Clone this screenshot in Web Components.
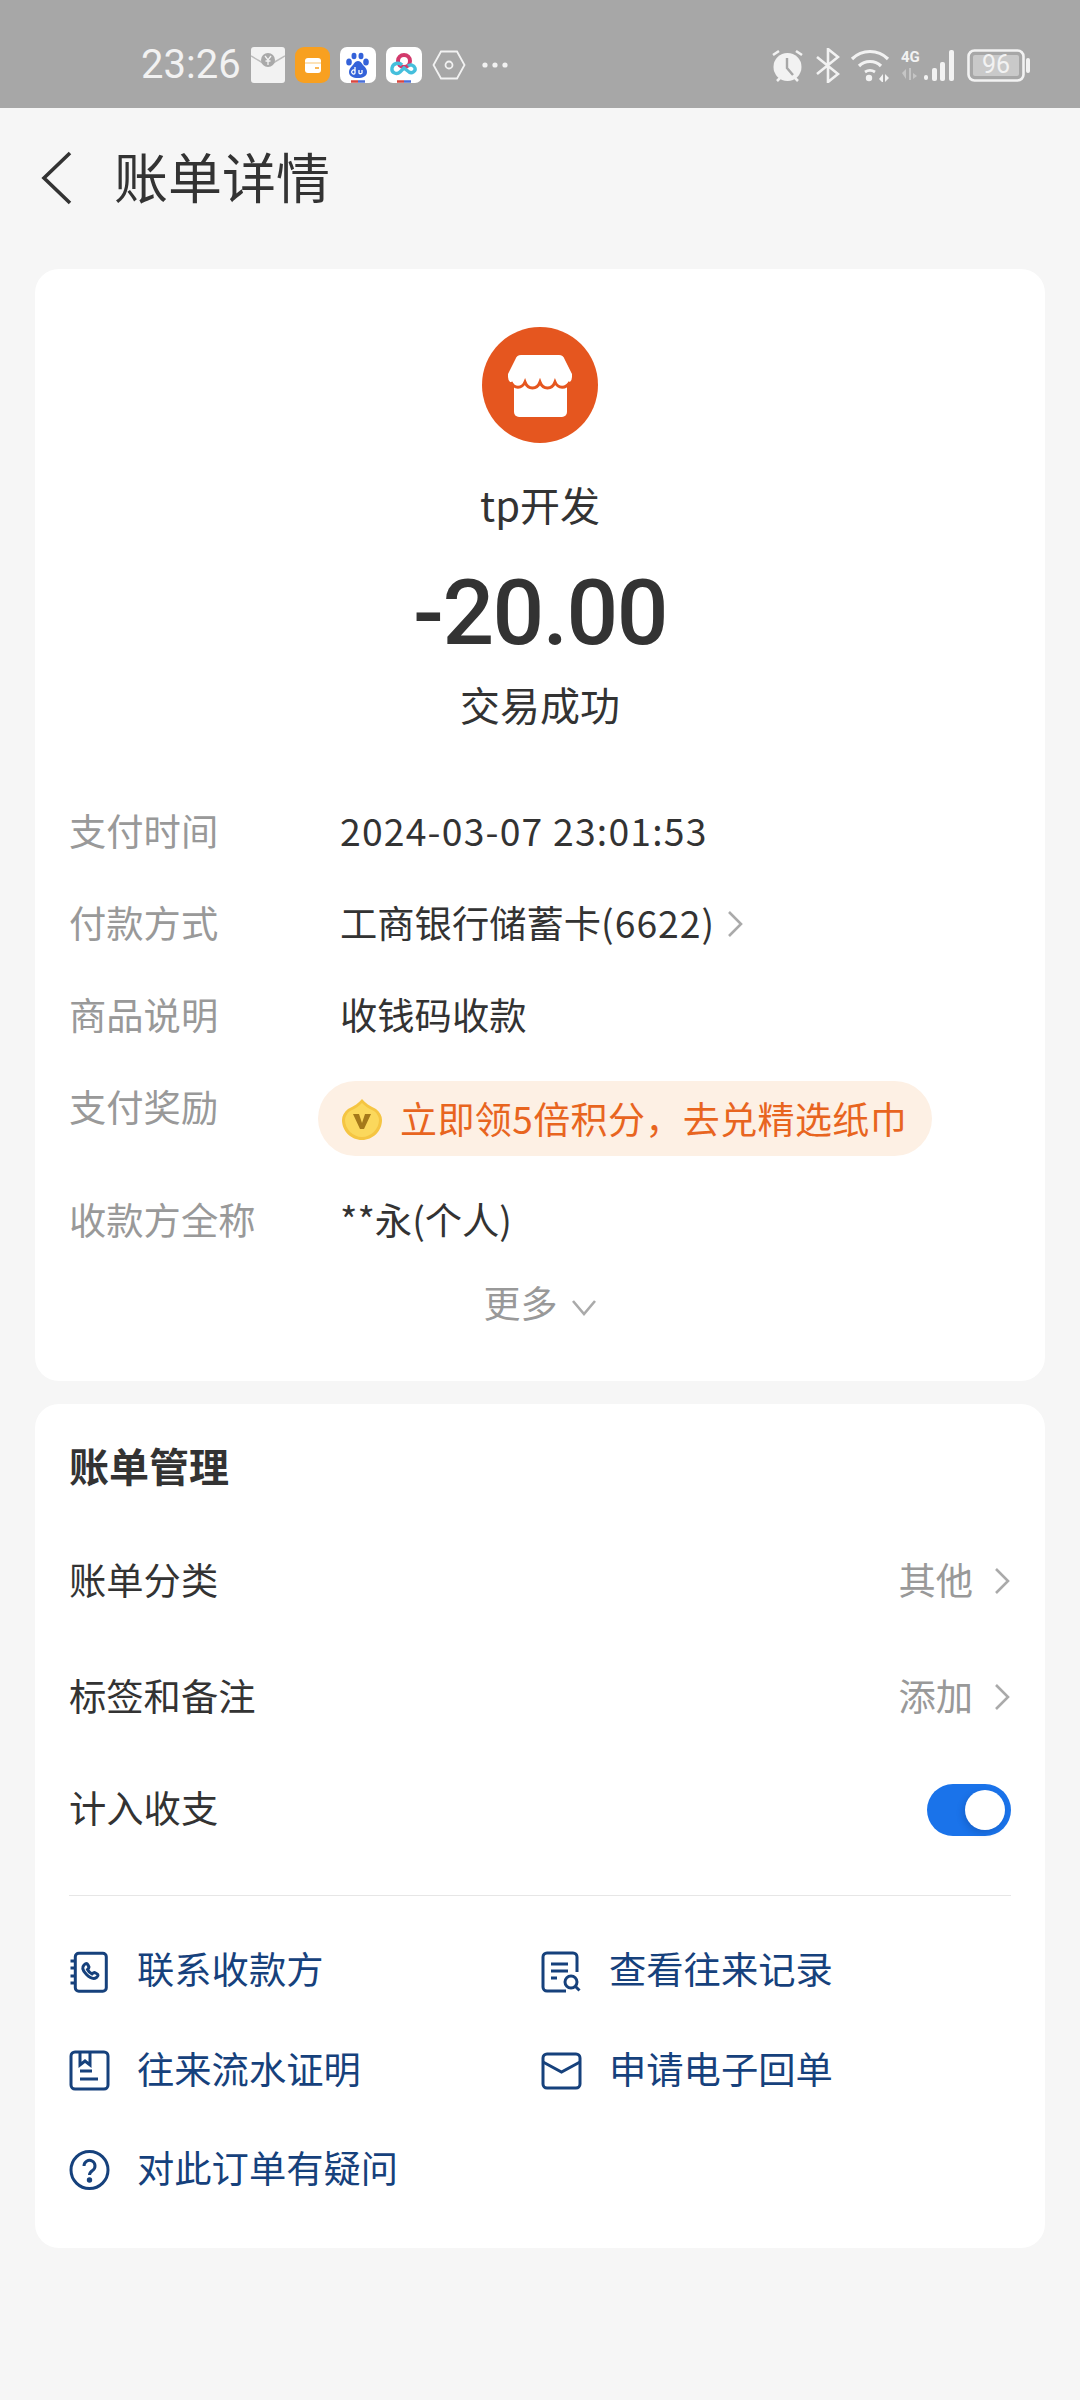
<!DOCTYPE html>
<html lang="zh">
<head>
<meta charset="utf-8">
<title>账单详情</title>
<style>
  html, body { margin: 0; padding: 0; background: #f6f6f6; }
  body { width: 1080px; height: 2400px; overflow: hidden; font-family: "Noto Sans CJK SC", "Noto Sans", sans-serif; color: #333; }
  .date { letter-spacing: 1.2px; }
  .card-no { letter-spacing: 1px; }
</style>
</head>
<body>
<status-bar></status-bar>
<app-header>账单详情</app-header>

<bill-card style="margin-top:28px">
  <bill-summary name="tp开发" amount="-20.00" status="交易成功"></bill-summary>
  <info-row label="支付时间"><span class="date">2024-03-07 23:01:53</span></info-row>
  <info-row label="付款方式" arrow><span>工商银行储蓄卡<span class="card-no">(6622)</span></span></info-row>
  <info-row label="商品说明">收钱码收款</info-row>
  <info-row label="支付奖励" tall><reward-pill>立即领5倍积分，去兑精选纸巾</reward-pill></info-row>
  <info-row label="收款方全称">**永(个人)</info-row>
  <more-toggle>更多</more-toggle>
</bill-card>

<bill-card style="margin-top:23px">
  <manage-panel heading="账单管理">
    <manage-row label="账单分类" value="其他"></manage-row>
    <manage-row label="标签和备注" value="添加"></manage-row>
    <manage-row label="计入收支" short><toggle-switch></toggle-switch></manage-row>
    <link-grid>
      <link-item icon="phone">联系收款方</link-item>
      <link-item icon="search">查看往来记录</link-item>
      <link-item icon="book">往来流水证明</link-item>
      <link-item icon="mail">申请电子回单</link-item>
      <link-item icon="help">对此订单有疑问</link-item>
    </link-grid>
  </manage-panel>
</bill-card>

<script>
const chevron = (dir, color) => {
  if (dir === 'down') {
    return `<svg width="26" height="17" viewBox="0 0 26 17" fill="none" stroke="${color}" stroke-width="2.6"><path d="M2 2l11 13L24 2"/></svg>`;
  }
  return `<svg width="17" height="28" viewBox="0 0 17 28" fill="none" stroke="${color}" stroke-width="2.6"><path d="M2 2l12 12L2 26"/></svg>`;
};

class StatusBar extends HTMLElement {
  constructor() {
    super();
    this.attachShadow({ mode: 'open' });
    this.shadowRoot.innerHTML = /*html*/`
      <style>
        :host { display: flex; align-items: center; height: 108px; background: #a7a7a7; box-sizing: border-box; padding: 22px 50px 0 141px; color: #f2f2f2; }
        .time { font: 400 40px/1 Roboto, sans-serif; width: 110px; }
        .left { display: flex; align-items: center; gap: 10px; }
        .right { display: flex; align-items: center; margin-left: auto; gap: 11px; }
        svg { display: block; }
      </style>
      <div class="time">23:26</div>
      <div class="left">
        <svg width="34" height="36" viewBox="0 0 34 36"><rect width="34" height="36" rx="3" fill="#f2f2f2"/><path d="M0 9l12 7a9 9 0 0 0 10 0l12-7" fill="none" stroke="#bdbdbd" stroke-width="1.5"/><circle cx="17" cy="13" r="7" fill="#a9a9a9"/><path d="M14 9l3 4 3-4M17 13v5M14.500 14h5" stroke="#f2f2f2" stroke-width="1.300" fill="none"/></svg>
        <svg width="35" height="36" viewBox="0 0 35 36"><rect width="35" height="36" rx="9" fill="#f8a020"/><rect x="10" y="11" width="16" height="15" rx="3" fill="#fff"/><path d="M10 16h16" stroke="#fbd9a0" stroke-width="1.500"/><path d="M20 21h4" stroke="#f8a020" stroke-width="1.500"/></svg>
        <svg width="36" height="37" viewBox="0 0 36 37"><rect width="36" height="36" rx="7" fill="#fff"/><g fill="#3462d9"><ellipse cx="9" cy="15" rx="2.800" ry="3.500"/><ellipse cx="14" cy="9" rx="2.500" ry="3.200"/><ellipse cx="21" cy="9" rx="2.500" ry="3.200"/><ellipse cx="26" cy="15" rx="2.800" ry="3.500"/><path d="M18 14c-3 0-4 3-6 5s-3 4-3 6c0 4 4 6 9 6s9-2 9-6c0-2-1-4-3-6s-3-5-6-5z"/></g><path d="M11 34.500h7" stroke="#d9473f" stroke-width="2.500"/><path d="M18 34.500h7" stroke="#4a6fd8" stroke-width="2.500"/><path d="M15 20v6.500M15 23.500a2 2 0 1 0 0 3M19 23v3c0 1 2.500 1 3 0v-3" fill="none" stroke="#fff" stroke-width="1.300"/></svg>
        <svg width="36" height="37" viewBox="0 0 36 37"><rect width="36" height="36" rx="7" fill="#fff"/><circle cx="18" cy="14" r="6" fill="none" stroke="#d23a6c" stroke-width="4"/><path d="M16 18c-3-3-9-2-10 3s5 7 8 4l4-4 5 4c3 2 7-1 6-4s-5-4-7-2" fill="none" stroke="#45bfdc" stroke-width="3.400"/><path d="M11 34.500h7" stroke="#d9473f" stroke-width="2.500"/><path d="M18 34.500h7" stroke="#4a6fd8" stroke-width="2.500"/></svg>
        <svg width="34" height="30" viewBox="0 0 34 30" fill="none" stroke="#f2f2f2" stroke-width="1.800"><path d="M9 1.500h16L32.500 15 25 28.500H9L1.500 15z"/><circle cx="17" cy="15" r="3.500"/></svg>
        <svg width="26" height="6" viewBox="0 0 26 6" fill="#f2f2f2" style="margin-left:6px"><circle cx="3" cy="3" r="2.600"/><circle cx="13" cy="3" r="2.600"/><circle cx="23" cy="3" r="2.600"/></svg>
      </div>
      <div class="right">
        <svg width="35" height="35" viewBox="0 0 35 35"><circle cx="17.500" cy="19" r="14" fill="#f2f2f2"/><path d="M17 10v10l6 7" fill="none" stroke="#a7a7a7" stroke-width="2.400"/><path d="M3 7l6-4M32 7l-6-4M7 33l3-3M28 33l-3-3" stroke="#f2f2f2" stroke-width="2.600"/></svg>
        <svg width="24" height="35" viewBox="0 0 24 35" fill="none" stroke="#f2f2f2" stroke-width="2.600"><path d="M1 9l21 17-10 8V1l10 8L1 26"/></svg>
        <svg width="40" height="34" viewBox="0 0 40 34" fill="none" stroke="#f2f2f2" style="margin-left:-1px"><path d="M2 11c10-10 26-10 36 0" stroke-width="3.200"/><path d="M9 18c6-6 16-6 22 0" stroke-width="3.200"/><path d="M15 24c3-2 7-2 10 0" stroke-width="2.800"/><circle cx="19" cy="30" r="3.200" fill="#f2f2f2" stroke="none"/><path d="M29 31l4-5v9zM35 26l4 4-4 4z" fill="#f2f2f2" stroke="none"/></svg>
        <div style="display:flex;flex-direction:column;width:19px;align-items:flex-start;font:700 15px/16px 'Roboto',sans-serif;margin:0 -2px -1px 0;height:34px"><span>4G</span><svg width="18" height="12" viewBox="0 0 18 12" style="margin-top:3px" fill="#c5c5c5"><path d="M1 5l4-4v10zM8 0h2v12H8zM12 5l4 3-4 3z"/></svg></div>
        <svg width="34" height="33" viewBox="0 0 34 33" fill="#f2f2f2" style="margin-left:-6px"><rect x="1" y="26" width="4" height="5" rx="2"/><rect x="9" y="19" width="5" height="13" rx="2"/><rect x="17" y="13" width="5" height="19" rx="2"/><rect x="26" y="1" width="5" height="31" rx="2"/></svg>
        <svg width="63" height="33" viewBox="0 0 63 33" style="margin-left:-1px"><rect x="1.500" y="1.500" width="55" height="30" rx="6" fill="none" stroke="#f2f2f2" stroke-width="2.600"/><rect x="6" y="6" width="46" height="21" rx="2" fill="#c9c9c9"/><rect x="59" y="9" width="4" height="15" rx="2" fill="#f2f2f2"/></svg>
        <div style="position:absolute;left:981px;top:50px;font:400 25px/30px Roboto,sans-serif;width:30px;text-align:center">96</div>
      </div>`;
  }
}

class AppHeader extends HTMLElement {
  constructor() {
    super();
    this.attachShadow({ mode: 'open' });
    this.shadowRoot.innerHTML = /*html*/`
      <style>
        :host { display: flex; align-items: center; height: 133px; padding-left: 40px; font-size: 54px; line-height: 70px; color: #333; }
        svg { display: block; margin: 6px 41px 0 0; }
        .title { margin-top: 2px; }
      </style>
      <svg width="33" height="54" viewBox="0 0 33 54" fill="none" stroke="#333" stroke-width="3.600"><path d="M30 2L4 27l26 25"/></svg>
      <div class="title"><slot></slot></div>`;
  }
}

class BillCard extends HTMLElement {
  constructor() {
    super();
    this.attachShadow({ mode: 'open' });
    this.shadowRoot.innerHTML = /*html*/`
      <style>
        :host { display: block; margin: 0 35px; width: 1010px; background: #fff; border-radius: 24px; box-sizing: border-box; padding: 0 34px; }
      </style>
      <slot></slot>`;
  }
}

class BillSummary extends HTMLElement {
  constructor() {
    super();
    this.attachShadow({ mode: 'open' });
    this.shadowRoot.innerHTML = /*html*/`
      <style>
        :host { display: flex; flex-direction: column; align-items: center; padding: 58px 0 52px; color: #333; }
        svg { display: block; }
        .name { font-size: 40px; line-height: 60px; margin-top: 31px; }
        .amount { font: 500 91px/100px Roboto, sans-serif; margin-top: 29px; color: #333; letter-spacing: -1.500px; }
        .status { font-size: 40px; line-height: 60px; margin-top: 11px; }
      </style>
      <svg width="116" height="116" viewBox="0 0 116 116">
        <circle cx="58" cy="58" r="58" fill="#e5561f"/>
        <path d="M32 44h53v41a5 5 0 0 1-5 5H37a5 5 0 0 1-5-5z" fill="#fff"/>
        <path d="M39 28h38a6 6 0 0 1 5.500 4L90 47v3a7 7 0 0 1-7 7H33a7 7 0 0 1-7-7v-3l7.500-15a6 6 0 0 1 5.500-4z" fill="#fff"/>
        <path d="M29 55c3 7 11 7 14 0 3 8 12 8 15 0 3 8 12 8 15 0 3 7 11 7 15 0" fill="none" stroke="#e5561f" stroke-width="3"/>
      </svg>
      <div class="name"></div>
      <div class="amount"></div>
      <div class="status"></div>`;
  }

  connectedCallback() {
    this.shadowRoot.querySelector('.name').textContent = this.getAttribute('name');
    this.shadowRoot.querySelector('.amount').textContent = this.getAttribute('amount');
    this.shadowRoot.querySelector('.status').textContent = this.getAttribute('status');
  }
}

class InfoRow extends HTMLElement {
  constructor() {
    super();
    this.attachShadow({ mode: 'open' });
    this.shadowRoot.innerHTML = /*html*/`
      <style>
        :host { display: flex; min-height: 92px; font-size: 37.300px; line-height: 89px; color: #333; }
        :host([tall]) { height: 113px; }
        .label { width: 271px; flex: none; color: #999; }
        .value { display: flex; align-items: center; height: 89px; gap: 12px; white-space: nowrap; }
        svg { display: block; margin-top: 3px; }
      </style>
      <div class="label"></div>
      <div class="value"><slot></slot></div>`;
  }

  connectedCallback() {
    this.shadowRoot.querySelector('.label').textContent = this.getAttribute('label');
    if (this.hasAttribute('arrow')) {
      this.shadowRoot.querySelector('.value').insertAdjacentHTML('beforeend', chevron('right', '#aaa'));
    }
  }
}

class RewardPill extends HTMLElement {
  constructor() {
    super();
    this.attachShadow({ mode: 'open' });
    this.shadowRoot.innerHTML = /*html*/`
      <style>
        :host { display: flex; align-items: center; gap: 18px; width: 614px; height: 75px; box-sizing: border-box; margin: 24px 0 0 -22px; padding: 0 0 0 24px; background: #fdf0e4; border-radius: 38px; color: #e8651f; font-size: 37px; line-height: 75px; letter-spacing: .4px; }
        svg { display: block; flex: none; margin: 0; }
      </style>
      <svg width="40" height="42" viewBox="0 0 40 42">
        <path d="M20 1c3 4 8 7 14 10 4 3 6 7 6 11 0 11-9 20-20 20S0 33 0 22c0-4 2-8 6-11C12 8 17 5 20 1z" fill="#f5c542"/>
        <path d="M20 5c3 3 7 6 12 8 3 2 5 6 5 9 0 9-8 17-17 17S3 31 3 22c0-3 2-7 5-9 5-2 9-5 12-8z" fill="#fbd85c"/>
        <path d="M11 16h6l3 9 3-9h6l-7 15h-4z" fill="#a5791a"/>
      </svg>
      <slot></slot>`;
  }
}

class MoreToggle extends HTMLElement {
  constructor() {
    super();
    this.attachShadow({ mode: 'open' });
    this.shadowRoot.innerHTML = /*html*/`
      <style>
        :host { display: flex; align-items: center; justify-content: center; gap: 13px; height: 70px; padding-bottom: 44px; font-size: 37px; color: #999; }
        svg { display: block; margin-top: 10px; }
      </style>
      <slot></slot>${chevron('down', '#aaa')}`;
  }
}

class ManagePanel extends HTMLElement {
  constructor() {
    super();
    this.attachShadow({ mode: 'open' });
    this.shadowRoot.innerHTML = /*html*/`
      <style>
        :host { display: block; padding: 31px 0 28px; }
        h2 { margin: 0 0 28px; font-size: 40px; line-height: 60px; font-weight: 700; color: #333; }
      </style>
      <h2></h2>
      <slot></slot>`;
  }

  connectedCallback() {
    this.shadowRoot.querySelector('h2').textContent = this.getAttribute('heading');
  }
}

class ManageRow extends HTMLElement {
  constructor() {
    super();
    this.attachShadow({ mode: 'open' });
    this.shadowRoot.innerHTML = /*html*/`
      <style>
        :host { display: flex; align-items: center; justify-content: space-between; height: 116px; font-size: 37.300px; color: #333; }
        :host([short]) { height: 108px; }
        .label, span { margin-bottom: 5px; }
        .right { display: flex; align-items: center; gap: 21px; color: #999; }
        svg { display: block; }
      </style>
      <div class="label"></div>
      <div class="right"><slot></slot></div>`;
  }

  connectedCallback() {
    this.shadowRoot.querySelector('.label').textContent = this.getAttribute('label');
    if (this.hasAttribute('value')) {
      const right = this.shadowRoot.querySelector('.right');
      right.insertAdjacentHTML('afterbegin', `<span>${this.getAttribute('value')}</span>`);
      right.insertAdjacentHTML('beforeend', chevron('right', '#aaa'));
    }
  }
}

class ToggleSwitch extends HTMLElement {
  constructor() {
    super();
    this.attachShadow({ mode: 'open' });
    this.shadowRoot.innerHTML = /*html*/`
      <style>
        :host { display: flex; align-items: center; justify-content: flex-end; width: 84px; height: 52px; margin-top: 2px; box-sizing: border-box; padding-right: 6px; background: #1a73ea; border-radius: 26px; }
        i { display: block; width: 40px; height: 40px; border-radius: 50%; background: #fff; box-shadow: -2px 3px 6px rgba(10, 50, 120, .25); }
      </style>
      <i></i>`;
  }
}

class LinkGrid extends HTMLElement {
  constructor() {
    super();
    this.attachShadow({ mode: 'open' });
    this.shadowRoot.innerHTML = /*html*/`
      <style>
        :host { display: grid; grid-template-columns: 472px 1fr; grid-auto-rows: 99.500px; margin-top: 32px; padding-top: 25px; border-top: 1px solid #e6e6e6; }
      </style>
      <slot></slot>`;
  }
}

const LINK_ICONS = {
  phone: '<rect x="6.300" y="3.300" width="31" height="38" rx="3.500"/><path d="M1.500 11h5M1.500 18h5M1.500 26h5M1.500 33h5"/><path d="M15 15c2-2 3-2 4 0l1 2c0 1-1 2-1.500 2.500 1 2 2.500 3.500 4.500 4.500.5-.5 1.500-1.500 2.500-1.500l2 1c2 1 2 2 0 4-3 2-7 0-10-3s-5-7-2.500-9.500z"/>',
  search: '<path d="M36 22V7a4 4 0 0 0-4-4H6a4 4 0 0 0-4 4v30a4 4 0 0 0 4 4h19"/><path d="M10 14h17M10 21h17M10 28h6"/><circle cx="30" cy="32" r="6"/><path d="M34.500 36.500l4 4"/>',
  book: '<rect x="2" y="3" width="37" height="37" rx="4"/><path d="M11 3v13l5-4 5 4V3M11 22h12M11 30h18"/>',
  mail: '<rect x="2" y="5" width="37" height="34" rx="4"/><path d="M2 13l18.500 10L39 13"/>',
  help: '<circle cx="20.500" cy="21" r="18.500"/><path d="M15 17a5.500 5.500 0 1 1 8.500 4.500c-2 1.400-3 2.300-3 4.500"/><circle cx="20.500" cy="31" r="1.200" fill="#16417c"/>',
};

class LinkItem extends HTMLElement {
  constructor() {
    super();
    this.attachShadow({ mode: 'open' });
    this.shadowRoot.innerHTML = /*html*/`
      <style>
        :host { display: flex; align-items: center; gap: 26px; font-size: 37.300px; color: #16417c; }
        svg { display: block; flex: none; margin-top: 2px; }
        .text { margin-bottom: 5px; }
      </style>
      <svg width="42" height="44" viewBox="0 0 42 44" fill="none" stroke="#16417c" stroke-width="3"></svg>
      <div class="text"><slot></slot></div>`;
  }

  connectedCallback() {
    this.shadowRoot.querySelector('svg').innerHTML = LINK_ICONS[this.getAttribute('icon')];
  }
}

customElements.define('status-bar', StatusBar);
customElements.define('app-header', AppHeader);
customElements.define('bill-card', BillCard);
customElements.define('bill-summary', BillSummary);
customElements.define('info-row', InfoRow);
customElements.define('reward-pill', RewardPill);
customElements.define('more-toggle', MoreToggle);
customElements.define('manage-panel', ManagePanel);
customElements.define('manage-row', ManageRow);
customElements.define('toggle-switch', ToggleSwitch);
customElements.define('link-grid', LinkGrid);
customElements.define('link-item', LinkItem);
</script>
</body>
</html>
